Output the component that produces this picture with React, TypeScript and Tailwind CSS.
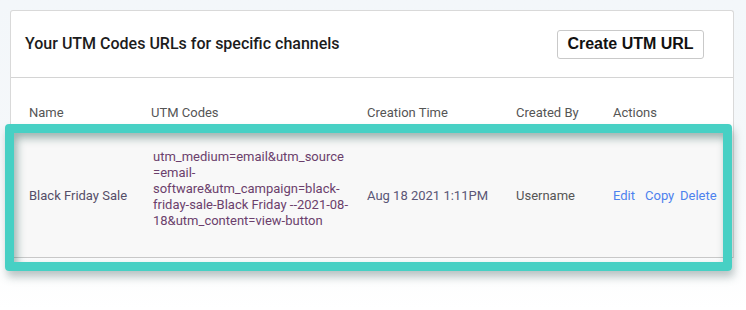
const ROBOTO = { fontFamily: 'Roboto, "Noto Sans", sans-serif' };

const UTM_LINES = [
  'utm_medium=email&utm_source',
  '=email-',
  'software&utm_campaign=black-',
  'friday-sale-Black Friday --2021-08-',
  '18&utm_content=view-button',
];

const COLS = 'grid grid-cols-[122px_216px_149px_97px_1fr]';

export default function App() {
  return (
    <div
      className="relative h-[310px] w-[746px] overflow-hidden bg-gradient-to-b from-[#f3f7fa] via-[#f5f8fa] to-white pl-[10px] pt-[10px]"
      style={ROBOTO}
    >
      {/* Card */}
      <div className="w-[724px] rounded-t-[3px] border-x border-t border-[#d9d9d9] bg-white">
        <div className="flex h-[67px] items-center justify-between border-b border-[#d4d4d4] pl-[14px] pr-[29px]">
          <h2 className="text-[16px] font-medium text-[#1c1c1c]">
            Your UTM Codes URLs for specific channels
          </h2>
          <button
            type="button"
            className="h-[29px] w-[147px] rounded-[3px] border border-[#c9c9c9] bg-white text-[16px] font-bold text-[#111]"
            style={{ fontFamily: '"Liberation Sans", Arial, sans-serif' }}
          >
            Create UTM URL
          </button>
        </div>

        {/* Table header */}
        <div className={`${COLS} pb-[10px] pl-[18px] pt-[27px] text-[13px] leading-[16px] text-[#555]`}>
          <span>Name</span>
          <span>UTM Codes</span>
          <span>Creation Time</span>
          <span>Created By</span>
          <span>Actions</span>
        </div>

        {/* Row */}
        <div className={`${COLS} h-[127px] items-center border-b border-[#c9c9c9] bg-[#f8f8f8] pl-[18px] pt-[3px] text-[13px] leading-[16px]`}>
          <span className="text-[#554e68]">Black Friday Sale</span>
          <div className="pb-[14px] pl-[2px] text-[#6b3f6c]">
            {UTM_LINES.map((line) => (
              <div key={line} className="whitespace-nowrap">{line}</div>
            ))}
          </div>
          <span className="text-[#5a5676]">Aug 18 2021 1:11PM</span>
          <span className="text-[#555]">Username</span>
          <span className="flex text-[#4d82ee]">
            <span className="w-[32px]">Edit</span>
            <span className="w-[35px]">Copy</span>
            <span>Delete</span>
          </span>
        </div>
      </div>

      {/* Highlight frame overlay */}
      <div className="pointer-events-none absolute left-[5px] top-[124px] h-[147px] w-[727px] rounded-[4px] border-[9px] border-[#47d0c4] shadow-[inset_3px_5px_8px_rgba(40,90,85,0.45),2px_6px_9px_rgba(60,90,90,0.35)]" />
    </div>
  );
}
